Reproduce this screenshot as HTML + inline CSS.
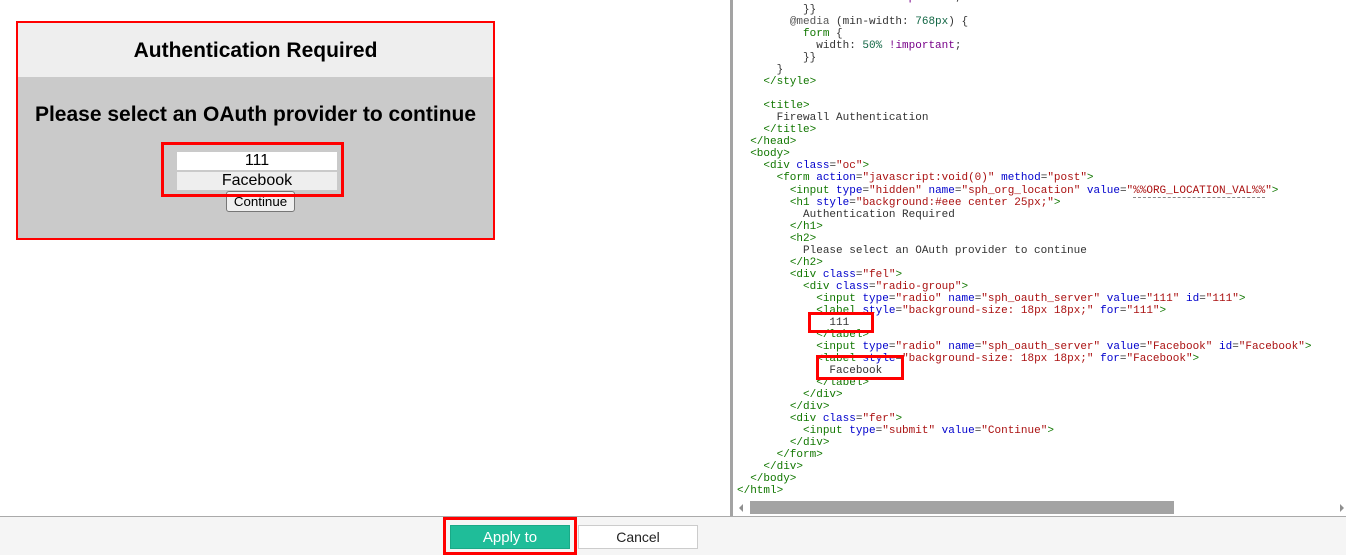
<!DOCTYPE html>
<html>
<head>
<meta charset="utf-8">
<title>Firewall Authentication</title>
<style>
html,body{margin:0;padding:0;background:#fff;}
body{width:1346px;height:555px;overflow:hidden;position:relative;font-family:"Liberation Sans",sans-serif;color:#000;}
.a{position:absolute;box-sizing:border-box;}
.c{text-align:center;}
pre{position:absolute;left:737px;top:-8px;margin:0;font:11px/12.03px "Liberation Mono",monospace;color:#333;}
.t{color:#170}.n{color:#00c}.s{color:#a11}.k{color:#708}.u{color:#164}.m{color:#555}
.d{border-bottom:1px dashed #888;}
</style>
</head>
<body>
<div class="a" style="left:16px;top:21px;width:479px;height:219px;background:#cacaca;border:2px solid #f00;"></div>
<div class="a c" style="left:18px;top:23px;width:475px;height:54px;background:#eee;font-weight:bold;font-size:21px;line-height:56px;">Authentication Required</div>
<div class="a c" style="left:18px;top:102px;width:475px;height:26px;font-weight:bold;font-size:21px;line-height:26px;">Please select an OAuth provider to continue</div>
<div class="a c" style="left:177px;top:152px;width:160px;height:18px;background:#fff;font-size:16px;line-height:18px;">111</div>
<div class="a c" style="left:177px;top:172px;width:160px;height:18px;background:#eee;font-size:16px;line-height:18px;">Facebook</div>
<div class="a c" style="left:226px;top:191px;width:69px;height:21px;background:#efefef;border:1px solid #767676;border-radius:3px;font-size:13.33px;line-height:19px;">Continue</div>
<div class="a" style="left:161px;top:142px;width:183px;height:55px;border:3px solid #f00;"></div>

<div class="a" style="left:730px;top:0;width:3px;height:516px;background:#a3a3a3;"></div>
<pre><span class="">            width: <span class="u">50%</span> <span class="k">!important</span>;</span>
          }}
        <span class="m">@media</span> (min-width: <span class="u">768px</span>) {
          <span class="t">form</span> {
            width: <span class="u">50%</span> <span class="k">!important</span>;
          }}
      }
    <span class="t">&lt;/style&gt;</span>

    <span class="t">&lt;title&gt;</span>
      Firewall Authentication
    <span class="t">&lt;/title&gt;</span>
  <span class="t">&lt;/head&gt;</span>
  <span class="t">&lt;body&gt;</span>
    <span class="t">&lt;div</span> <span class="n">class</span>=<span class="s">"oc"</span><span class="t">&gt;</span>
      <span class="t">&lt;form</span> <span class="n">action</span>=<span class="s">"javascript:void(0)"</span> <span class="n">method</span>=<span class="s">"post"</span><span class="t">&gt;</span>
        <span class="t">&lt;input</span> <span class="n">type</span>=<span class="s">"hidden"</span> <span class="n">name</span>=<span class="s">"sph_org_location"</span> <span class="n">value</span>=<span class="s">"<span class="d">%%ORG_LOCATION_VAL%%</span>"</span><span class="t">&gt;</span>
        <span class="t">&lt;h1</span> <span class="n">style</span>=<span class="s">"background:#eee center 25px;"</span><span class="t">&gt;</span>
          Authentication Required
        <span class="t">&lt;/h1&gt;</span>
        <span class="t">&lt;h2&gt;</span>
          Please select an OAuth provider to continue
        <span class="t">&lt;/h2&gt;</span>
        <span class="t">&lt;div</span> <span class="n">class</span>=<span class="s">"fel"</span><span class="t">&gt;</span>
          <span class="t">&lt;div</span> <span class="n">class</span>=<span class="s">"radio-group"</span><span class="t">&gt;</span>
            <span class="t">&lt;input</span> <span class="n">type</span>=<span class="s">"radio"</span> <span class="n">name</span>=<span class="s">"sph_oauth_server"</span> <span class="n">value</span>=<span class="s">"111"</span> <span class="n">id</span>=<span class="s">"111"</span><span class="t">&gt;</span>
            <span class="t">&lt;label</span> <span class="n">style</span>=<span class="s">"background-size: 18px 18px;"</span> <span class="n">for</span>=<span class="s">"111"</span><span class="t">&gt;</span>
              111
            <span class="t">&lt;/label&gt;</span>
            <span class="t">&lt;input</span> <span class="n">type</span>=<span class="s">"radio"</span> <span class="n">name</span>=<span class="s">"sph_oauth_server"</span> <span class="n">value</span>=<span class="s">"Facebook"</span> <span class="n">id</span>=<span class="s">"Facebook"</span><span class="t">&gt;</span>
            <span class="t">&lt;label</span> <span class="n">style</span>=<span class="s">"background-size: 18px 18px;"</span> <span class="n">for</span>=<span class="s">"Facebook"</span><span class="t">&gt;</span>
              Facebook
            <span class="t">&lt;/label&gt;</span>
          <span class="t">&lt;/div&gt;</span>
        <span class="t">&lt;/div&gt;</span>
        <span class="t">&lt;div</span> <span class="n">class</span>=<span class="s">"fer"</span><span class="t">&gt;</span>
          <span class="t">&lt;input</span> <span class="n">type</span>=<span class="s">"submit"</span> <span class="n">value</span>=<span class="s">"Continue"</span><span class="t">&gt;</span>
        <span class="t">&lt;/div&gt;</span>
      <span class="t">&lt;/form&gt;</span>
    <span class="t">&lt;/div&gt;</span>
  <span class="t">&lt;/body&gt;</span>
<span class="t">&lt;/html&gt;</span></pre>
<div class="a" style="left:808px;top:312px;width:66px;height:21px;border:3px solid #f00;"></div>
<div class="a" style="left:816px;top:355px;width:88px;height:25px;border:3px solid #f00;"></div>

<div class="a" style="left:733px;top:501px;width:613px;height:15px;background:#fff;"></div>
<div class="a" style="left:750px;top:501px;width:424px;height:13px;background:#a3a3a3;"></div>
<svg class="a" style="left:738px;top:503px;" width="6" height="10"><path d="M5 1v8L1 5z" fill="#8f8f8f"/></svg>
<svg class="a" style="left:1339px;top:503px;" width="6" height="10"><path d="M1 1v8l4-4z" fill="#8f8f8f"/></svg>

<div class="a" style="left:0;top:516px;width:1346px;height:39px;background:#f5f5f5;border-top:1px solid #aaa;"></div>
<div class="a c" style="left:450px;top:525px;width:120px;height:24px;background:#1fbd99;border:1px solid #1aa987;color:#fff;font-size:15px;line-height:24px;">Apply to</div>
<div class="a c" style="left:578px;top:525px;width:120px;height:24px;background:#fff;border:1px solid #ccc;color:#222;font-size:14px;line-height:23px;">Cancel</div>
<div class="a" style="left:443px;top:517px;width:134px;height:38px;border:3px solid #f00;"></div>
</body>
</html>
